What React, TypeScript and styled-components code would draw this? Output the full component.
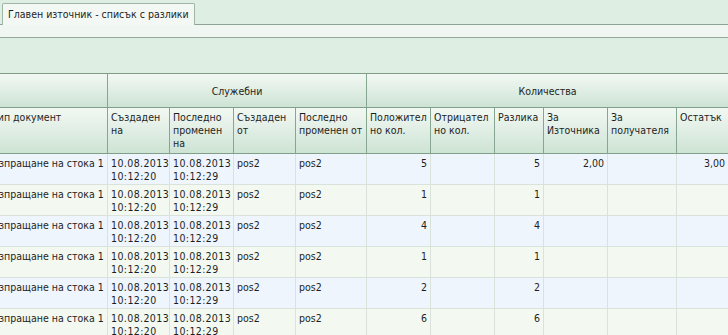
import React from 'react';
import styled, { createGlobalStyle, css } from 'styled-components';

const GlobalStyle = createGlobalStyle`
    html, body {
        margin: 0;
        padding: 0;
        background: #deeee3;
        overflow: hidden;
    }
    body {
        font-family: "DejaVu Sans Condensed", "DejaVu Sans", Tahoma, sans-serif;
        font-size: 10.5px;
        color: #1e1e1e;
    }
`;

// border-to-border widths of the grid columns (first one is scrolled 11px left)
const COLS = [119, 62, 64, 62, 71, 64, 64, 49, 64, 69, 52];
const template = COLS.map((w) => `${w}px`).join(' ');

const Page = styled.div`
    width: 728px;
    height: 335px;
    overflow: hidden;
    display: flex;
    flex-direction: column;
`;

const TabStrip = styled.div`
    height: 24px;
    background: #deeee3;
    display: flex;
    align-items: flex-end;
    padding-left: 2px;
`;

const Tab = styled.div`
    height: 22px;
    box-sizing: border-box;
    padding: 4px 5px 0 5px;
    background: #f3f8f4;
    border: 1px solid #9fb5a6;
    border-bottom: none;
    border-radius: 2px 2px 0 0;
    white-space: nowrap;
    position: relative;
    top: 1px;
`;

const SubStrip = styled.div`
    height: 12px;
    background: #f0f6f2;
    border-top: 1px solid #8ea595;
    border-bottom: 1px solid #93a898;
`;

const Toolbar = styled.div`
    height: 35px;
    background: #deeee3;
    border-bottom: 1px solid #7e9b87;
`;

const Viewport = styled.div`
    flex: 1;
    overflow: hidden;
    background: #ffffff;
`;

const Grid = styled.div`
    margin-left: -11px;
    width: ${COLS.reduce((a, b) => a + b, 0)}px;
`;

const Row = styled.div<{ $height: number; $bg?: string }>`
    display: grid;
    grid-template-columns: ${template};
    height: ${(p) => p.$height}px;
    background: ${(p) => p.$bg || 'transparent'};
`;

const headerBg = css`
    background: linear-gradient(to bottom, #f2f8f3 0%, #e2efe6 45%, #cde3d4 100%);
`;

const GroupCell = styled.div<{ $span: number }>`
    grid-column: span ${(p) => p.$span};
    ${headerBg};
    border-right: 1px solid #87a691;
    border-bottom: 1px solid #7f9f89;
    display: flex;
    align-items: center;
    justify-content: center;
    padding-top: 1px;
    box-sizing: border-box;
    white-space: nowrap;
`;

const HeadCell = styled.div<{ $pre?: boolean }>`
    ${headerBg};
    border-right: 1px solid #87a691;
    border-bottom: 1px solid #7f9f89;
    padding: 3px 1px 0 3px;
    line-height: 13px;
    box-sizing: border-box;
    overflow: hidden;
    white-space: ${(p) => (p.$pre ? 'pre' : 'normal')};
`;

const Cell = styled.div<{ $right?: boolean; $nowrap?: boolean }>`
    border-right: 1px solid #d9e2db;
    border-bottom: 1px solid #d9e2db;
    padding: 3px 3px 0 3px;
    line-height: 13px;
    box-sizing: border-box;
    overflow: hidden;
    white-space: ${(p) => (p.$nowrap ? 'nowrap' : 'pre-line')};
    text-align: ${(p) => (p.$right ? 'right' : 'left')};
`;

const DateCell = styled(Cell)`
    letter-spacing: 0.4px;
`;

const headers = [
    'Тип документ',
    'Създаден на',
    'Последно променен на',
    'Създаден от',
    'Последно\nпроменен от',
    'Положител\nно кол.',
    'Отрицател\nно кол.',
    'Разлика',
    'За Източника',
    'За получателя',
    'Остатък',
];

const rows = [
    { pos: '5', diff: '5', src: '2,00', rest: '3,00' },
    { pos: '1', diff: '1', src: '', rest: '' },
    { pos: '4', diff: '4', src: '', rest: '' },
    { pos: '1', diff: '1', src: '', rest: '' },
    { pos: '2', diff: '2', src: '', rest: '' },
    { pos: '6', diff: '6', src: '', rest: '' },
];

const App = () => {
    return (
        <Page>
            <GlobalStyle />
            <TabStrip>
                <Tab>Главен източник - списък с разлики</Tab>
            </TabStrip>
            <SubStrip />
            <Toolbar />
            <Viewport>
                <Grid>
                    <Row $height={34}>
                        <GroupCell $span={1} />
                        <GroupCell $span={4}>Служебни</GroupCell>
                        <GroupCell $span={6}>Количества</GroupCell>
                    </Row>
                    <Row $height={46}>
                        {headers.map((h, i) => (
                            <HeadCell key={i} $pre={h.includes('\n')}>
                                {h}
                            </HeadCell>
                        ))}
                    </Row>
                    {rows.map((r, i) => (
                        <Row key={i} $height={31} $bg={i % 2 === 0 ? '#eef5fd' : '#f3f9f0'}>
                            <Cell $nowrap>Изпращане на стока 1</Cell>
                            <DateCell>{'10.08.2013\n10:12:20'}</DateCell>
                            <DateCell>{'10.08.2013\n10:12:29'}</DateCell>
                            <Cell>pos2</Cell>
                            <Cell>pos2</Cell>
                            <Cell $right>{r.pos}</Cell>
                            <Cell $right></Cell>
                            <Cell $right>{r.diff}</Cell>
                            <Cell $right>{r.src}</Cell>
                            <Cell $right></Cell>
                            <Cell $right>{r.rest}</Cell>
                        </Row>
                    ))}
                </Grid>
            </Viewport>
        </Page>
    );
};

export default App;
